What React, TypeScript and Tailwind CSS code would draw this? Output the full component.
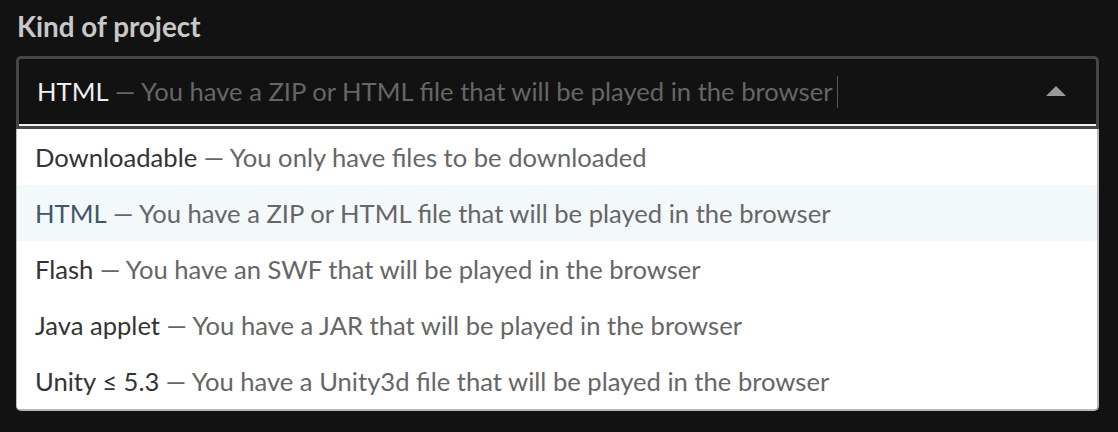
import React from "react";

type Kind = {
  id: string;
  label: string;
  desc: string;
};

const kinds: Kind[] = [
  { id: "default", label: "Downloadable", desc: "You only have files to be downloaded" },
  { id: "html", label: "HTML", desc: "You have a ZIP or HTML file that will be played in the browser" },
  { id: "flash", label: "Flash", desc: "You have an SWF that will be played in the browser" },
  { id: "java", label: "Java applet", desc: "You have a JAR that will be played in the browser" },
  { id: "unity", label: "Unity ≤ 5.3", desc: "You have a Unity3d file that will be played in the browser" },
];

const KindOption = ({ kind, active }: { kind: Kind; active: boolean }) => (
  <div
    className={`flex items-center h-[56px] pl-[18px] text-[25.6px] whitespace-nowrap ${active ? "bg-[#f3f8fb]" : "bg-white"}`}
  >
    <span className={active ? "text-[#3f5768]" : "text-[#333333]"}>{kind.label}</span>
    <span className="text-[#666666]">&nbsp;— {kind.desc}</span>
  </div>
);

export default function App() {
  const selected = kinds[1];
  return (
    <div className="w-full h-[432px] bg-[#121212] px-4 pt-[9px]" style={{ fontFamily: "Lato, 'Open Sans', sans-serif" }}>
      <div className="text-[27.8px] font-bold text-[#c8c8c8] leading-[36px] pl-[1px]">Kind of project</div>
      <div className="mt-[11px] w-[1083px]">
        <div className="border-[3px] border-[#464646] rounded-t-[5px] bg-[#121212]">
          <div className="flex items-center h-[67px] pl-[18px] pr-[30px] border-b-2 border-[#f2f2f2] text-[25.6px] whitespace-nowrap">
            <span className="text-[#eeeeee]">{selected.label}</span>
            <span className="text-[#666666]">&nbsp;— {selected.desc}</span>
            <span className="ml-[4px] w-px h-[32px] bg-[#5a5a5a]" />
            <span className="flex-1" />
            <svg width="20" height="10" viewBox="0 0 20 10" className="mb-[2px]">
              <polygon points="0,10 10,0 20,10" fill="#999999" />
            </svg>
          </div>
        </div>
        <div className="bg-white border-l border-r-2 border-b-2 border-[#b8b8b8] rounded-b-[5px] overflow-hidden">
          {kinds.map((k) => (
            <KindOption key={k.id} kind={k} active={k.id === selected.id} />
          ))}
        </div>
      </div>
    </div>
  );
}
